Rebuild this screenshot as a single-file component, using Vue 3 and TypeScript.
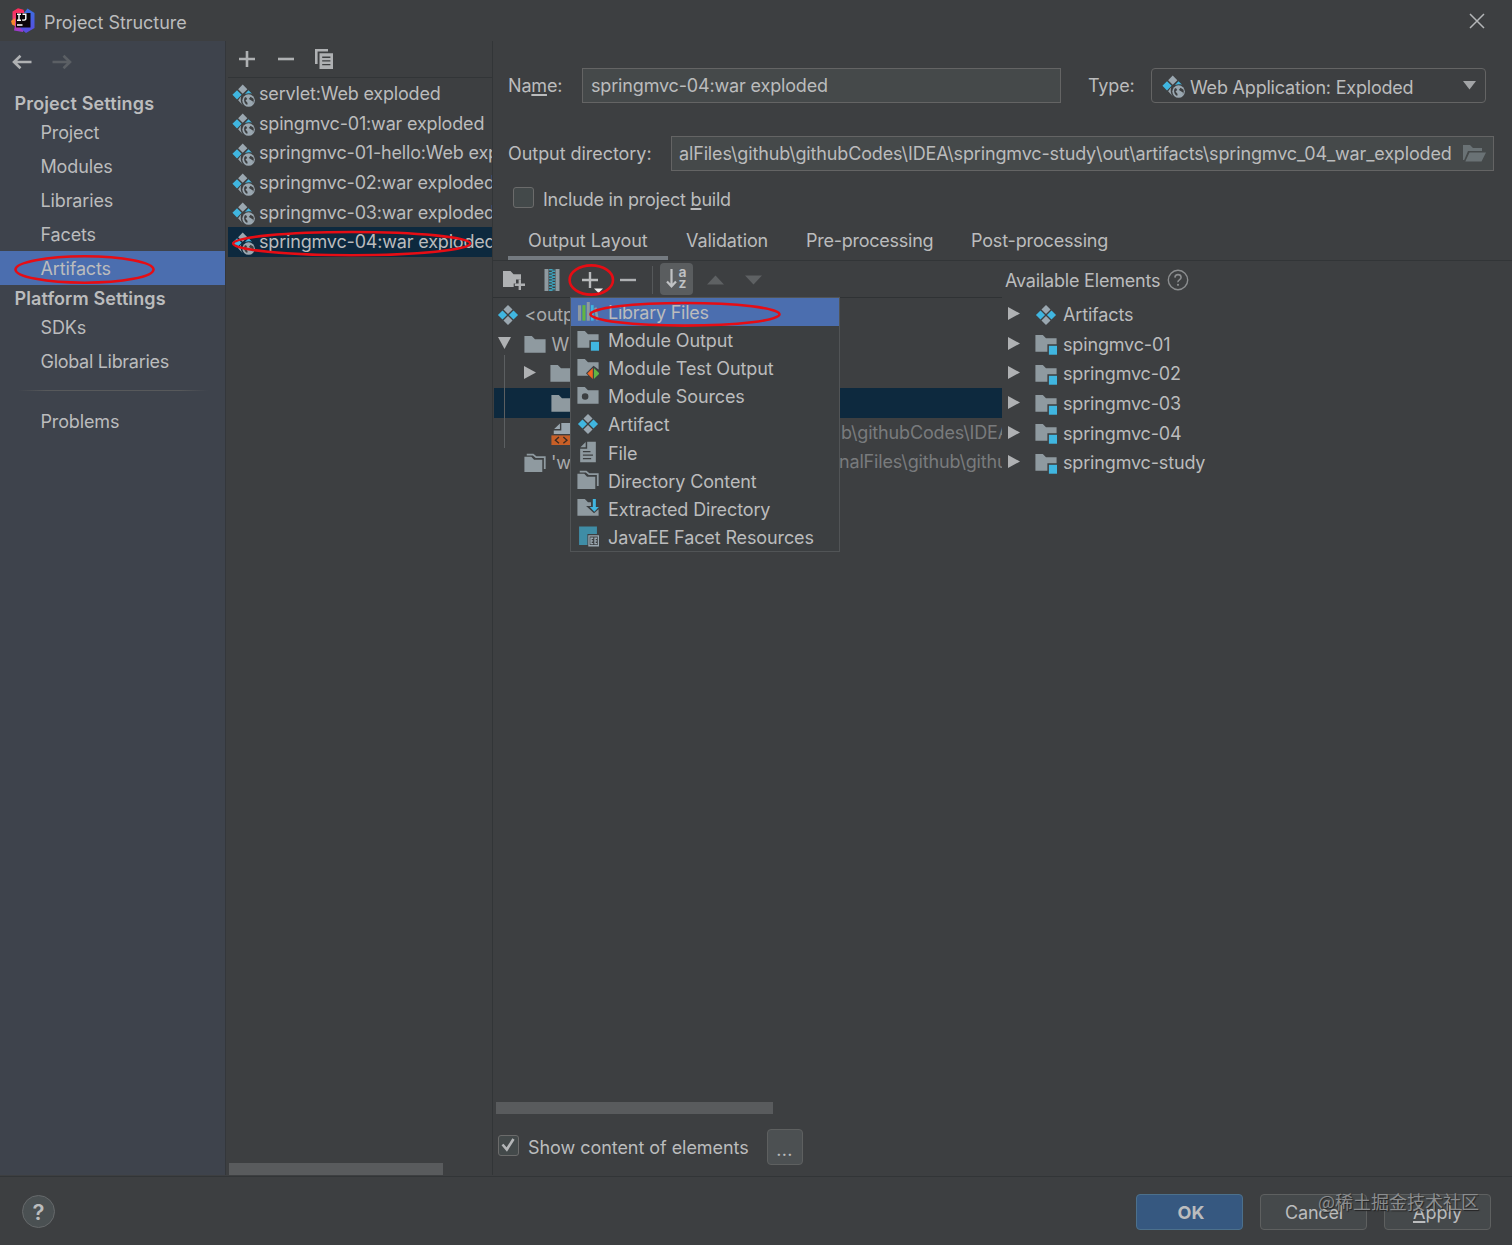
<script setup lang="ts">
interface TreeRow {
  indent: number
  arrow?: 'down' | 'right'
  icon: string
  label: string
  path?: string
  pathStart?: number
  selected?: boolean
}

const projectItems = ['Project', 'Modules', 'Libraries', 'Facets', 'Artifacts']
const platformItems = ['SDKs', 'Global Libraries']

const artifacts = [
  'servlet:Web exploded',
  'spingmvc-01:war exploded',
  'springmvc-01-hello:Web exploded',
  'springmvc-02:war exploded',
  'springmvc-03:war exploded',
  'springmvc-04:war exploded',
]

const tabs = ['Output Layout', 'Validation', 'Pre-processing', 'Post-processing']

const outputTree: TreeRow[] = [
  { indent: 3, icon: 'artifact', label: '<output root>' },
  { indent: 3, arrow: 'down', icon: 'folder', label: 'WEB-INF' },
  { indent: 29, arrow: 'right', icon: 'folder', label: 'classes' },
  { indent: 56.5, icon: 'folder', label: 'lib', selected: true },
  { indent: 56.5, icon: 'webxml', label: 'web.xml', path: 'b\\githubCodes\\IDEA\\springmvc', pathStart: 347 },
  { indent: 29.5, icon: 'folders', label: "'web' directory", path: 'nalFiles\\github\\githubCodes', pathStart: 345 },
]

const available = [
  { icon: 'artifact', label: 'Artifacts' },
  { icon: 'module', label: 'spingmvc-01' },
  { icon: 'module', label: 'springmvc-02' },
  { icon: 'module', label: 'springmvc-03' },
  { icon: 'module', label: 'springmvc-04' },
  { icon: 'module', label: 'springmvc-study' },
]

const menu = [
  { icon: 'library', label: 'Library Files' },
  { icon: 'module', label: 'Module Output' },
  { icon: 'test', label: 'Module Test Output' },
  { icon: 'sources', label: 'Module Sources' },
  { icon: 'artifact', label: 'Artifact' },
  { icon: 'file', label: 'File' },
  { icon: 'folders', label: 'Directory Content' },
  { icon: 'extract', label: 'Extracted Directory' },
  { icon: 'javaee', label: 'JavaEE Facet Resources' },
]
</script>

<template>
  <div class="window">
    <svg class="defs" width="0" height="0">
      <defs>
        <linearGradient id="ij-a" x1="0" y1="0" x2="0" y2="1">
          <stop offset="0" stop-color="#fe2857" /><stop offset=".55" stop-color="#e8467c" /><stop offset="1" stop-color="#9039d8" />
        </linearGradient>
        <linearGradient id="ij-b" x1="0" y1="0" x2="0" y2="1">
          <stop offset="0" stop-color="#3b6fe0" /><stop offset="1" stop-color="#5a4be0" />
        </linearGradient>
      </defs>
      <symbol id="artifact" viewBox="0 0 16 16">
        <path fill="#9aa7b0" d="M8 .7l3.300 3.300L8 7.300 4.700 4zM8 8.700l3.300 3.300L8 15.300 4.700 12z" />
        <path fill="#40b6e0" d="M4 4.700L7.300 8 4 11.300.7 8zM12 4.700L15.300 8 12 11.300 8.700 8z" />
      </symbol>
      <symbol id="webartifact" viewBox="0 0 16.500 16.500">
        <path fill="#9aa7b0" d="M7.700 .4l3.300 3.300-3.300 3.300L4.400 3.700zM6.600 8.800l-2.200 2.900 3.300 3.600c-1.500-2-1.800-4.300-1.100-6.500z" />
        <path fill="#40b6e0" d="M3.600 4.500L6.900 7.800 3.600 11.100.3 7.800zM11.800 4.500l2.600 2.500c-1.900-.6-3.600-.4-5.200.4z" />
        <circle cx="11.900" cy="11.900" r="4.500" fill="#9aa7b0" />
        <path fill="#3d3f41" d="M9 9.800c-.6 1.500-.4 3.200.8 4.500l1.100.8.300-1.400-1.500-1.900 1.200-1.100-.9-1.400zM13.300 9.200l-1.200 1.600 1.500.9 1.600 1.100-.5 1.300c.9-1 1.200-2.500.600-3.700z" />
      </symbol>
      <symbol id="folder" viewBox="0 0 16 16">
        <path fill="#8f9aa0" d="M.3 1.500h5.400l2.300 2.400h7.700v9.800H.3z" />
      </symbol>
      <symbol id="module" viewBox="0 0 16 16">
        <path fill="#8f9aa0" d="M.3 1.500h5.400l2.300 2.400h7.700v4.300H9v5.500H.3z" />
        <path fill="#40b6e0" d="M10.100 9.300h6v6.500h-6z" />
      </symbol>
      <symbol id="test" viewBox="0 0 16 16">
        <path fill="#8f9aa0" d="M.3 1.500h5.400l2.300 2.400h7.700V9L12 6.300l-5.500 5.500 1.800 1.900H.3z" />
        <path fill="#f26522" d="M11.500 8v8l-4-4z" />
        <path fill="#62b543" d="M12.300 8v8l4-4z" />
      </symbol>
      <symbol id="sources" viewBox="0 0 16 16">
        <path fill="#8f9aa0" fill-rule="evenodd" d="M.3 1.500h5.400l2.300 2.400h7.700v9.800H.3zM5.900 6a2.400 2.400 0 100 4.800 2.400 2.400 0 000-4.800z" />
      </symbol>
      <symbol id="folders" viewBox="0 0 16 16">
        <path fill="#8f9aa0" d="M.3 3.400h5l2 2.200h6v9H.3z" />
        <path fill="none" stroke="#8f9aa0" stroke-width="1.300" d="M2 1.900h4.600l2.200 1.900h6.300v8.600" />
      </symbol>
      <symbol id="file" viewBox="0 0 16 16">
        <path fill="#8f9aa0" fill-rule="evenodd" d="M7.400.5h6.300v15H2.300V5.700h5.100zM4.300 7.200v1h5.500v-1zm0 2.600v1h7.300v-1zm0 2.500v1h6v-1z" />
        <path fill="#8f9aa0" d="M6.300.8v3.800H2.500z" />
      </symbol>
      <symbol id="extract" viewBox="0 0 16 16">
        <path fill="#8f9aa0" d="M.3 1.500h5.400l2.300 2.400h2.200v2.600H6.600l5.800 5.400 3.300-3v4.800H.3z" />
        <path fill="#40b6e0" d="M11.500 1.500h2.200v5.800h2.200l-3.300 3.400-3.300-3.400h2.200z" />
      </symbol>
      <symbol id="javaee" viewBox="0 0 16 16">
        <path fill="#3f8da6" d="M1.500 1h13v5.600H7.600v8H1.500z" />
        <path fill="none" stroke="#9aa7b0" stroke-width="1" d="M8.700 7.900h6.900v7.200H8.700zM11.800 9.600h-1.600v3.900h1.600M10.200 11.500h1.500M14.600 9.600h-1.500v3.900h1.500M13.100 11.500h1.400" />
      </symbol>
      <symbol id="library" viewBox="0 0 16 16">
        <path fill="#8f9aa0" d="M.7 3h2.300v11.300H.7zM7.100.8h2.200v13.500H7.100z" />
        <path fill="#62b543" d="M3.900 3h2.300v11.300H3.900z" />
        <path fill="#40b6e0" d="M10.100 3h2v11.300h-2z" />
        <path fill="#8f9aa0" d="M12.500 5l1.700-.5 1.800 9.300-1.900.5z" />
      </symbol>
      <symbol id="webxml" viewBox="0 0 16 16">
        <path fill="#9aa7b0" d="M7.500 0h6.800v8H2V5.500h5.500zM6.500.4v4H2.300z" />
        <path fill="#c75f27" d="M.3 9H16v7.500H.3z" />
        <path fill="none" stroke="#3c2b22" stroke-width="1" d="M5.800 10.200L3.200 12.500l2.600 2.200M9 10.200l2.600 2.300L9 14.700" />
      </symbol>
    </svg>

    <header class="titlebar">
      <svg class="logo" width="24" height="25" viewBox="0 0 24 25">
        <path fill="url(#ij-a)" d="M1.500 3.500L7 .3l5.500 1.500L15 10 12 24l-9-1.500 1-5-2.500-3z" />
        <path fill="#f7862b" d="M0 13l4-3v8l-3-1.500z" />
        <path fill="url(#ij-b)" d="M13 5l3.500-4.500L23.500 5v15l-8.500 5-6-5z" />
        <path fill="#0b0508" d="M5 5h14.500v14.500H5z" />
        <path fill="none" stroke="#fff" stroke-width="1.400" d="M6 6.300h4M8 6.300v6M6 12.300h4M11.500 6.300h3.300v4.400q0 1.700-3.600 1.300M6 17h5.500" />
      </svg>
      <span class="title">Project Structure</span>
      <svg class="close" width="16" height="16" viewBox="0 0 16 16"><path d="M1 1l14 14M15 1L1 15" stroke="#b4b6b8" stroke-width="1.500" /></svg>
    </header>

    <main class="body">
      <nav class="sidebar">
        <div class="history">
          <svg width="20" height="16" viewBox="0 0 20 16"><path d="M19.500 8H2M8.500 1.700L2 8l6.500 6.300" fill="none" stroke="#afb1b3" stroke-width="2.600" /></svg>
          <svg width="20" height="16" viewBox="0 0 20 16"><path d="M.5 8H18M11.500 1.700L18 8l-6.500 6.300" fill="none" stroke="#5b5f64" stroke-width="2.600" /></svg>
        </div>
        <h2>Project Settings</h2>
        <a v-for="item in projectItems" :key="item" :class="{ active: item === 'Artifacts' }">{{ item }}</a>
        <h2 class="second">Platform Settings</h2>
        <a v-for="item in platformItems" :key="item" :class="{ tight: item === 'Global Libraries' }">{{ item }}</a>
        <hr />
        <a>Problems</a>
      </nav>

      <section class="list">
        <div class="list-tools">
          <i><svg width="16" height="16" viewBox="0 0 16 16"><path d="M8 0v16M0 8h16" stroke="#afb1b3" stroke-width="2.600" /></svg></i>
          <i><svg width="16" height="16" viewBox="0 0 16 16"><path d="M0 8h16" stroke="#afb1b3" stroke-width="2.600" /></svg></i>
          <i><svg width="18" height="20" viewBox="0 0 18 20"><path fill="#afb1b3" fill-rule="evenodd" d="M0 0h13v2.500H2.600V15H0zM4.500 4.300H18V20H4.500zM7.200 7.600v1.300h8.200V7.600zm0 3.700v1.300h8.200v-1.300zm0 3.700v1.300h8.200V15z" /></svg></i>
        </div>
        <div class="rows">
          <div v-for="(a, i) in artifacts" :key="a" class="row" :class="{ selected: i === 5 }">
            <svg class="ic23"><use href="#webartifact" /></svg>
            <span>{{ a }}</span>
          </div>
        </div>
        <div class="hscroll"></div>
      </section>

      <section class="editor">
        <div class="form-row name-row">
          <label class="name">Na<u>m</u>e:</label>
          <div class="field name-field">springmvc-04:war exploded</div>
          <label class="type">Type:</label>
          <div class="select">
            <svg class="ic23"><use href="#webartifact" /></svg>
            <span>Web Application: Exploded</span>
            <svg class="caret" width="13" height="9" viewBox="0 0 13 9"><path fill="#a2a4a6" d="M0 0h13L6.500 8.500z" /></svg>
          </div>
        </div>
        <div class="form-row dir-row">
          <label class="dir">Output directory:</label>
          <div class="field dir-field">
            <span class="dir-text">alFiles\github\githubCodes\IDEA\springmvc-study\out\artifacts\springmvc_04_war_exploded</span>
            <svg width="23" height="17" viewBox="0 0 23 17"><path fill="#6a7275" d="M0 0h7l3 3h9v3H5L1.200 15H0zM6.500 7.500H23L18.500 16.500H2.300z" /></svg>
          </div>
        </div>
        <div class="check-row">
          <span class="box"></span>
          <span>Include in project <u>b</u>uild</span>
        </div>
        <div class="tabs">
          <span v-for="(t, i) in tabs" :key="t" class="tab" :class="['t' + i, { on: i === 0 }]">{{ t }}</span>
        </div>

        <div class="panes">
          <div class="layout-pane">
            <div class="tools">
              <i><svg width="22" height="20" viewBox="0 0 22 20"><path fill="#afb1b3" d="M0 1h7.500l3 3.200H18v5.300h-5v4h-2.300V17H0z" /><path stroke="#afb1b3" stroke-width="2.400" d="M16.800 9.500V20M11.800 14.700H22" /></svg></i>
              <i><svg width="16" height="22" viewBox="0 0 16 22"><path fill="#8f9aa0" d="M.5 0h4v22h-4zM11.500 0h4v22h-4z" /><path stroke="#3fa3bd" stroke-width="3.400" stroke-dasharray="1.600 1.300" d="M6.800 0v22" /><path stroke="#3fa3bd" stroke-width="3.400" stroke-dasharray="1.600 1.300" stroke-dashoffset="1.400" d="M9.500 0v22" /></svg></i>
              <i><svg width="26" height="26" viewBox="0 0 26 26"><path d="M13 5v16M5 13h16" stroke="#b9bbbd" stroke-width="2.400" /><path fill="#f0f0f0" d="M17 21.500h9L21.500 26z" /></svg></i>
              <i><svg width="16" height="16" viewBox="0 0 16 16"><path d="M0 8h16" stroke="#afb1b3" stroke-width="2.400" /></svg></i>
              <b class="sep"></b>
              <i class="pressed"><span class="sort"><svg width="11" height="20" viewBox="0 0 11 20"><path d="M5.500 0v17M1 12.500L5.500 17.300 10 12.500" fill="none" stroke="#c0c2c4" stroke-width="2.200" /></svg><em>a<br />z</em></span></i>
              <i><svg width="17" height="10" viewBox="0 0 17 10"><path fill="#5e6163" d="M0 9.500h17L8.500.5z" /></svg></i>
              <i><svg width="17" height="10" viewBox="0 0 17 10"><path fill="#5e6163" d="M0 .5h17L8.500 9.500z" /></svg></i>
            </div>
            <div class="tree">
              <div v-for="row in outputTree" :key="row.label" class="tree-row" :class="{ selected: row.selected }" :style="{ paddingLeft: row.indent + 'px' }">
                <svg v-if="row.arrow === 'down'" class="arrow down" width="13" height="12" viewBox="0 0 13 12"><path fill="#afb1b3" d="M0 0h13L6.500 12z" /></svg>
                <svg v-if="row.arrow === 'right'" class="arrow right" width="12" height="13" viewBox="0 0 12 13"><path fill="#afb1b3" d="M0 0l12 6.500L0 13z" /></svg>
                <svg class="ic22"><use :href="'#' + row.icon" /></svg>
                <span class="tree-label">{{ row.label }}</span>
                <span v-if="row.path" class="path" :style="{ left: row.pathStart + 'px' }">{{ row.path }}</span>
              </div>
              <div class="guide"></div>
            </div>
            <div class="pane-scroll"></div>
            <div class="menu">
              <div v-for="(m, i) in menu" :key="m.label" class="menu-item" :class="{ hot: i === 0 }">
                <svg class="ic22"><use :href="'#' + m.icon" /></svg>
                <span>{{ m.label }}</span>
              </div>
            </div>
          </div>

          <div class="available">
            <div class="available-head">
              <span>Available Elements</span>
              <svg width="22" height="22" viewBox="0 0 22 22"><circle cx="11" cy="11" r="9.700" fill="none" stroke="#8b8d8f" stroke-width="1.400" /><path d="M7.900 8.600q.2-3 3.100-3t3.100 2.600q0 1.500-1.700 2.600T11 13.200" fill="none" stroke="#8b8d8f" stroke-width="1.600" /><circle cx="11" cy="15.800" r="1.100" fill="#8b8d8f" /></svg>
            </div>
            <div v-for="a in available" :key="a.label" class="avail-row">
              <svg class="arrow" width="12" height="13" viewBox="0 0 12 13"><path fill="#afb1b3" d="M0 0l12 6.500L0 13z" /></svg>
              <svg class="ic22"><use :href="'#' + a.icon" /></svg>
              <span>{{ a.label }}</span>
            </div>
          </div>
        </div>

        <div class="show-row">
          <span class="box"><svg width="19" height="19" viewBox="1 1 19 19"><path d="M4.500 9.500l4.300 5L15.500 4" fill="none" stroke="#b4b6b8" stroke-width="2.600" /></svg></span>
          <span class="show-label">Show content of elements</span>
          <span class="dots">...</span>
        </div>
      </section>
    </main>

    <footer class="footer">
      <span class="help">?</span>
      <button class="ok">OK</button>
      <button class="cancel">Cancel</button>
      <button><u>A</u>pply</button>
    </footer>

    <span class="watermark">@稀土掘金技术社区</span>
    <svg class="marks" width="1512" height="1245" viewBox="0 0 1512 1245">
      <g fill="none" stroke="#e60d14" stroke-width="2.600">
        <ellipse cx="84.500" cy="269.500" rx="69" ry="13.200" />
        <ellipse cx="351.700" cy="243.600" rx="118.500" ry="11.600" />
        <ellipse cx="591.300" cy="280" rx="21.700" ry="14.600" />
        <ellipse cx="685" cy="314.300" rx="94.500" ry="11.300" />
      </g>
    </svg>
  </div>
</template>

<style>
body { margin: 0; background: #3c3f41; }
</style>

<style scoped>
* { box-sizing: border-box; }
.window { position: relative; display: flex; flex-direction: column; width: 1512px; height: 1245px; overflow: hidden; background: #3d3f41; color: #bbbcbd; font: 18px/22px Inter, "Noto Sans", sans-serif; letter-spacing: -0.16px; }
.defs { position: absolute; }
svg { display: block; flex: none; }
span, label { white-space: nowrap; }
u { text-underline-offset: 2px; text-decoration-thickness: 1.5px; }
.ic22 { width: 22px; height: 22px; }
.ic23 { width: 23px; height: 23px; }

.titlebar { display: flex; align-items: center; flex: none; height: 41px; padding: 0 27px 0 11px; }
.title { margin: 4px 0 0 9px; letter-spacing: -0.05px; }
.close { margin-left: auto; }

.body { display: flex; flex: none; height: 1135px; }
.sidebar { display: flex; flex-direction: column; flex: none; width: 226px; height: 1134px; background: #3e434c; border-right: 1px solid #34373b; }
.history { display: flex; gap: 20px; height: 50px; padding: 13px 0 0 12px; }
.sidebar h2 { height: 24px; margin: 0; padding-left: 14.500px; font-size: 18px; line-height: 25px; font-weight: 600; letter-spacing: 0.140px; }
.sidebar h2.second { height: 25px; line-height: 27px; letter-spacing: 0.100px; }
.sidebar a { height: 34px; padding-left: 40.500px; line-height: 36px; letter-spacing: -0.14px; }
.sidebar a.active { background: #4b6eaf; }
.sidebar a.tight { letter-spacing: -0.3px; }
.sidebar hr { width: 190px; height: 1px; margin: 12px 0 13px 18px; border: 0; background: linear-gradient(90deg, transparent, #57595b 15%, #57595b 85%, transparent); }

.list { display: flex; flex-direction: column; flex: none; width: 267px; height: 1134px; padding-left: 2px; border-right: 1px solid #323537; }
.list-tools { display: flex; height: 37px; border-bottom: 1px solid #323537; }
.list-tools i { display: grid; place-items: center; width: 38.500px; height: 36px; }
.rows { padding-top: 1.500px; overflow: hidden; }
.row { display: flex; align-items: center; gap: 4.500px; height: 29.600px; padding: 0 0 0 3.500px; letter-spacing: -0.18px; }
.row.selected { background: #0d293e; }
.row .ic23 { margin-top: 2px; }
.hscroll { width: 214px; height: 12px; margin: auto 0 0 1px; background: #595b5d; }

.editor { display: flex; flex-direction: column; width: 1019px; height: 1134px; }
.form-row { display: flex; align-items: center; height: 35px; padding-left: 15px; }
.name-row { margin-top: 27px; }
.dir-row { margin-top: 33px; }
.name { width: 74px; }
.dir { width: 163px; letter-spacing: -0.05px; }
.field { display: flex; align-items: center; height: 35px; padding: 0 8px; background: #45494a; border: 1px solid #646464; }
.name-field { width: 479px; }
.type { width: 90px; padding-left: 27px; }
.select { display: flex; align-items: center; width: 335px; height: 35px; padding: 4px 9px 0 10px; border: 1px solid #646464; border-radius: 4px; }
.select span { margin-left: 5px; letter-spacing: -0.2px; }
.select .ic23 { margin-top: -3px; }
.caret { margin: -4px 0 0 auto; }
.dir-field { width: 823px; padding: 0 7px; }
.dir-text { letter-spacing: -0.145px; }
.dir-field svg { margin-left: auto; }
.check-row { display: flex; align-items: center; gap: 9px; height: 24px; margin-top: 17px; padding-left: 20px; letter-spacing: -0.22px; }
.box { flex: none; width: 21px; height: 21px; background: #43494a; border: 1px solid #6b6b6b; border-radius: 3px; }
.check-row .box { margin-top: -5px; }
.tabs { display: flex; height: 49px; padding-left: 15px; border-bottom: 1px solid #323537; }
.tab { padding-top: 18px; height: 48px; }
.t0 { width: 160px; padding-left: 20px; border-bottom: 4px solid #747a80; letter-spacing: -0.03px; }
.t1 { width: 120px; margin-left: 18px; letter-spacing: -0.1px; }
.t2 { width: 165px; letter-spacing: -0.25px; }

.panes { display: flex; flex: none; height: 867px; }
.layout-pane { position: relative; display: flex; flex-direction: column; width: 509px; height: 853px; }
.tools { display: flex; align-items: center; height: 37px; padding: 1px 0 0 2px; border-bottom: 1px solid #2f3234; }
.tools i { display: grid; place-items: center; width: 38px; height: 36px; font-style: normal; }
.sep { width: 1px; height: 28px; margin: 0 5px; background: #55585a; }
.tools .pressed { width: 33px; height: 32px; margin: -2px 3px 0 2px; background: #5a5d5f; border-radius: 4px; }
.sort { display: flex; align-items: center; gap: 1px; }
.sort em { font: 600 14px/11px Inter, sans-serif; letter-spacing: 0; color: #c0c2c4; padding-bottom: 3px; }
.tree { position: relative; padding-top: 1.500px; overflow: hidden; margin-left: 1px; }
.tree-row { position: relative; display: flex; align-items: center; height: 29.600px; padding-top: 2px; white-space: nowrap; }
.tree-row.selected { background: #0d293e; }
.tree-row .arrow.down { margin: -4px 13px 0 1px; }
.tree-row .arrow.right { margin: -3px 14px 0 1px; }
.tree-label { margin-left: 5.500px; color: #a9abad; }
.path { position: absolute; top: 4px; color: #797b7d; }
.guide { position: absolute; left: 10px; top: 57px; width: 1px; height: 93px; background: #5c5f61; }
.pane-scroll { width: 277px; height: 12px; margin: auto 0 0 3px; background: #595b5d; }

.menu { position: absolute; left: 77px; top: 36px; width: 270px; height: 255px; background: #3c3f41; border: 1px solid #515456; }
.menu-item { display: flex; align-items: center; gap: 9px; height: 28.100px; padding: 2px 0 0 6px; letter-spacing: -0.12px; }
.menu-item .ic22 { margin-top: -3px; }
.menu-item.hot { background: #4b6eaf; letter-spacing: -0.25px; }

.available { padding-left: 3px; }
.available-head { display: flex; align-items: center; gap: 7px; height: 39px; padding-top: 1px; letter-spacing: -0.2px; }
.available-head svg { margin-top: -2px; }
.avail-row { display: flex; align-items: center; height: 29.600px; padding: 1px 0 0 3px; }
.avail-row .ic22 { margin: -1px 6px 0 15px; }
.avail-row .arrow { margin-top: -3px; }

.show-row { display: flex; align-items: center; height: 36px; padding-left: 5px; }
.show-row .box { margin-top: -1px; }
.show-label { width: 220.500px; margin: 4px 18px 0 9px; letter-spacing: -0.05px; }
.dots { width: 36px; height: 36px; margin-top: 1px; background: #4c5052; border: 1px solid #5e6060; border-radius: 4px; text-align: center; line-height: 40px; letter-spacing: 0.3px; }

.footer { display: flex; align-items: center; flex: none; height: 69px; padding: 1px 21px 0 22px; border-top: 1px solid #323537; }
.help { width: 33px; height: 33px; margin-right: auto; background: #4a5052; border: 1px solid #66696b; border-radius: 50%; text-align: center; font-size: 22px; font-weight: 600; line-height: 32px; letter-spacing: 0; }
button { width: 107px; height: 36px; margin-left: 17px; padding: 3px 0 0; background: #45494b; border: 1px solid #5e6060; border-radius: 4px; color: #bbbcbd; font: inherit; letter-spacing: 0; }
button.ok { padding-left: 3px; background: #365880; border-color: #4c708c; font-weight: 700; }
button.cancel { letter-spacing: -0.2px; padding-left: 1px; }
.watermark { position: absolute; left: 1318px; top: 1189px; color: #8b8d8f; font: 18px/24px "Noto Sans CJK SC", sans-serif; letter-spacing: 0; text-shadow: 1px 1px 1px #222; }
.marks { position: absolute; left: 0; top: 0; pointer-events: none; }
</style>
